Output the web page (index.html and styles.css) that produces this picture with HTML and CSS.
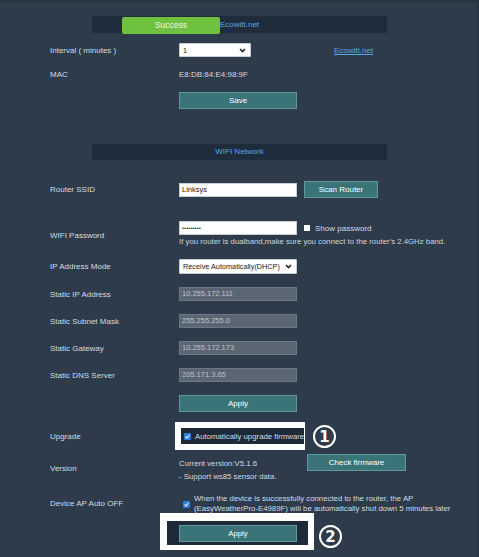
FILE: index.html
```html
<!DOCTYPE html>
<html>
<head>
<meta charset="utf-8">
<link rel="stylesheet" href="styles.css">
</head>
<body>
<div class="page">
  <div class="bar">
    <span>Ecowitt.net</span>
    <div class="toast">Success</div>
  </div>

  <div class="row h14 mt10">
    <div class="label">Interval ( minutes )</div>
    <div class="ctrl">
      <div class="select sel-short"><span>1</span>
        <svg class="chev" width="7" height="5" viewBox="0 0 7 5"><path d="M1 1 L3.5 3.6 L6 1" fill="none" stroke="#222" stroke-width="1.5"/></svg>
      </div>
      <a class="link">Ecowitt.net</a>
    </div>
  </div>

  <div class="row h14 mt10">
    <div class="label">MAC</div>
    <div class="ctrl">E8:DB:84:E4:98:9F</div>
  </div>

  <div class="row h17 mt11">
    <div class="label"></div>
    <div class="ctrl"><div class="btn w118">Save</div></div>
  </div>

  <div class="bar bar-wifi"><span>WIFI Network</span></div>

  <div class="row h17 mt21">
    <div class="label">Router SSID</div>
    <div class="ctrl">
      <div class="input">Linksys</div>
      <div class="btn scan">Scan Router</div>
    </div>
  </div>

  <div class="row h28 mt23">
    <div class="label">WIFI Password</div>
    <div class="ctrl col">
      <div class="line">
        <div class="input pw">•••••••••</div>
        <span class="box"></span>
        <span class="show">Show password</span>
      </div>
      <div class="hint">If you router is dualband,make sure you connect to the router's 2.4GHz band.</div>
    </div>
  </div>

  <div class="row h15 mt10">
    <div class="label">IP Address Mode</div>
    <div class="ctrl">
      <div class="select sel-long"><span>Receive Automatically(DHCP)</span>
        <svg class="chev" width="7" height="5" viewBox="0 0 7 5"><path d="M1 1 L3.5 3.6 L6 1" fill="none" stroke="#222" stroke-width="1.5"/></svg>
      </div>
    </div>
  </div>

  <div class="row h14 mt13">
    <div class="label">Static IP Address</div>
    <div class="ctrl"><div class="input off">10.255.172.111</div></div>
  </div>
  <div class="row h14 mt13">
    <div class="label">Static Subnet Mask</div>
    <div class="ctrl"><div class="input off">255.255.255.0</div></div>
  </div>
  <div class="row h14 mt13">
    <div class="label">Static Gateway</div>
    <div class="ctrl"><div class="input off">10.255.172.173</div></div>
  </div>
  <div class="row h14 mt13">
    <div class="label">Static DNS Server</div>
    <div class="ctrl"><div class="input off">205.171.3.65</div></div>
  </div>

  <div class="row h17 mt13">
    <div class="label"></div>
    <div class="ctrl"><div class="btn w118">Apply</div></div>
  </div>

  <div class="row h14 mt17">
    <div class="label">Upgrade</div>
    <div class="ctrl">
      <div class="mark mark-1"></div>
      <span class="check">
        <svg width="7" height="7" viewBox="0 0 7 7"><rect width="7" height="7" rx="1.2" fill="#2f7fe0"/><path d="M1.6 3.6 L3 5 L5.5 2" fill="none" stroke="#fff" stroke-width="1.1"/></svg>
      </span>
      <span class="on-top">Automatically upgrade firmware</span>
      <div class="badge badge-1">1</div>
    </div>
  </div>

  <div class="row h29 mt11">
    <div class="label">Version</div>
    <div class="ctrl top">
      <div class="ver">Current version:V5.1.6<br>- Support ws85 sensor data.</div>
      <div class="btn fw">Check firmware</div>
    </div>
  </div>

  <div class="row h25 mt8">
    <div class="label">Device AP Auto OFF</div>
    <div class="ctrl">
      <span class="check ap">
        <svg width="7" height="7" viewBox="0 0 7 7"><rect width="7" height="7" rx="1.2" fill="#2f7fe0"/><path d="M1.6 3.6 L3 5 L5.5 2" fill="none" stroke="#fff" stroke-width="1.1"/></svg>
      </span>
      <div class="aptext">When the device is successfully connected to the router, the AP<br>(EasyWeatherPro-E4989F) will be automatically shut down 5 minutes later</div>
    </div>
  </div>

  <div class="row h17 mt9">
    <div class="label"></div>
    <div class="ctrl">
      <div class="mark mark-2"></div>
      <div class="btn w118 on-top">Apply</div>
      <div class="badge badge-2">2</div>
    </div>
  </div>
</div>
</body>
</html>
```

FILE: styles.css
```css
* { box-sizing: border-box; }
html, body { margin: 0; height: 100%; }
body {
  background: #2d3b4b;
  font-family: "Liberation Sans", Arial, sans-serif;
  font-size: 8px;
  color: #d3d9e0;
  overflow: hidden;
  border-top: 2px solid #27333f;
  border-right: 2px solid #27333f;
}
.page { padding: 14px 0 0 50px; }

.bar {
  position: relative;
  margin-left: 42px;
  width: 295px;
  height: 17px;
  background: #1f2c3b;
  color: #5aa6e6;
  text-align: center;
  line-height: 17px;
}
.bar-wifi { margin-top: 35px; height: 16px; line-height: 16px; }
.toast {
  position: absolute;
  left: 30px;
  top: 1px;
  width: 98px;
  height: 17px;
  border-radius: 2px;
  background: #6fc23f;
  color: #eef8e8;
  font-size: 8.5px;
  line-height: 17px;
  text-align: center;
}

.row { display: flex; align-items: center; }
.h14 { height: 14px; }
.h15 { height: 15px; }
.h17 { height: 17px; }
.h25 { height: 25px; }
.h28 { height: 28px; }
.h29 { height: 29px; }
.mt8 { margin-top: 8px; }
.mt9 { margin-top: 9px; }
.mt10 { margin-top: 10px; }
.mt11 { margin-top: 11px; }
.mt13 { margin-top: 13px; }
.mt17 { margin-top: 17px; }
.mt21 { margin-top: 21px; }
.mt23 { margin-top: 23px; }

.label { width: 129px; flex: none; color: #d5dbe2; }
.ctrl { display: flex; align-items: center; position: relative; height: 100%; }
.ctrl.col { flex-direction: column; align-items: flex-start; }
.ctrl.top { align-items: flex-start; }
.line { display: flex; align-items: center; height: 14px; }

.input {
  width: 118px;
  height: 14px;
  background: #fff;
  border: 1px solid #c8cdd2;
  color: #222;
  font-size: 7.5px;
  line-height: 12px;
  padding-left: 2px;
}
.input.off {
  background: #5b6673;
  border-color: #6c7684;
  color: #bcc4cd;
}
.input.pw { font-size: 6px; letter-spacing: 0; line-height: 12px; color: #333; }

.select {
  display: flex;
  align-items: center;
  justify-content: space-between;
  height: 15px;
  background: #fff;
  border: 1px solid #c8cdd2;
  border-radius: 1px;
  color: #222;
  font-size: 7.3px;
  padding: 0 4px 0 3px;
}
.sel-short { width: 72px; height: 14px; }
.sel-long { width: 118px; }
.chev { flex: none; }

.link {
  margin-left: 83px;
  color: #5aa6e6;
  text-decoration: underline;
}

.btn {
  height: 17px;
  background: #3a7479;
  border: 1px solid #6199a0;
  color: #fff;
  display: flex;
  align-items: center;
  justify-content: center;
}
.w118 { width: 118px; }
.scan { width: 74px; margin-left: 7px; }
.fw { width: 99px; }

.box {
  width: 6px;
  height: 6px;
  background: #fff;
  margin: 0 5px 0 7px;
  flex: none;
}
.show { color: #d5dbe2; }
.hint { color: #cfd6dd; font-size: 7.8px; line-height: 14px; white-space: nowrap; }

.check { display: flex; margin: 0 4px 0 5px; position: relative; z-index: 1; }
.check.ap { margin: 1px 4px 0 4px; }
.on-top { position: relative; z-index: 1; font-size: 7.8px; white-space: nowrap; }

.ver { width: 128px; padding-top: 3px; line-height: 13px; font-size: 7.8px; white-space: nowrap; }
.aptext { line-height: 9.5px; font-size: 7.8px; white-space: nowrap; color: #d5dbe2; }

.mark {
  position: absolute;
  background: #1e2a37;
  border-style: solid;
  border-color: #fff;
}
.mark-1 {
  left: -4px;
  top: -7px;
  width: 130px;
  height: 28px;
  border-width: 6px 1px 6px 6px;
}
.mark-2 {
  left: -19px;
  top: -12px;
  width: 154px;
  height: 37px;
  border-width: 8px 6px 5px 7px;
}

.badge {
  position: absolute;
  width: 23px;
  height: 23px;
  border: 2px solid #fff;
  border-radius: 50%;
  color: #fff;
  font-weight: bold;
  font-size: 15px;
  display: flex;
  align-items: center;
  justify-content: center;
  font-family: "DejaVu Sans", sans-serif;
}
.badge-1 { left: 134px; top: -4px; }
.badge-2 { left: 140px; top: 0; }
```
